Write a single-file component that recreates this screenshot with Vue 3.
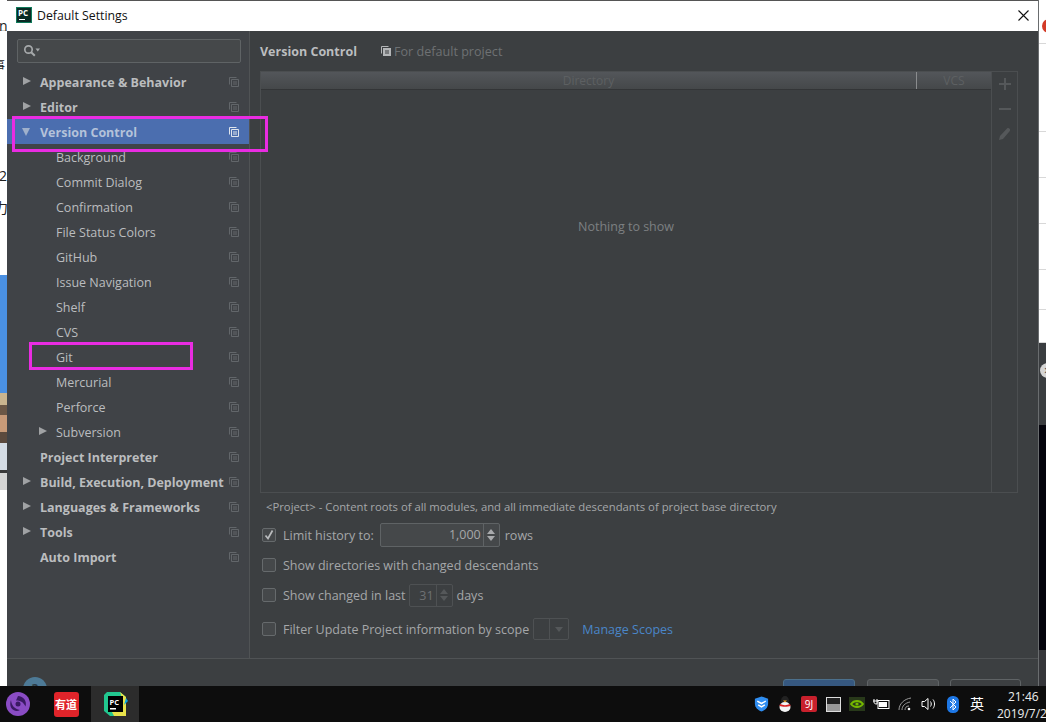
<script setup>
const tree = [
  { label: 'Appearance & Behavior', level: 0, arrow: 'right' },
  { label: 'Editor', level: 0, arrow: 'right' },
  { label: 'Version Control', level: 0, arrow: 'down', selected: true },
  { label: 'Background', level: 1 },
  { label: 'Commit Dialog', level: 1 },
  { label: 'Confirmation', level: 1 },
  { label: 'File Status Colors', level: 1 },
  { label: 'GitHub', level: 1 },
  { label: 'Issue Navigation', level: 1 },
  { label: 'Shelf', level: 1 },
  { label: 'CVS', level: 1 },
  { label: 'Git', level: 1 },
  { label: 'Mercurial', level: 1 },
  { label: 'Perforce', level: 1 },
  { label: 'Subversion', level: 1, arrow: 'right' },
  { label: 'Project Interpreter', level: 0 },
  { label: 'Build, Execution, Deployment', level: 0, arrow: 'right' },
  { label: 'Languages & Frameworks', level: 0, arrow: 'right' },
  { label: 'Tools', level: 0, arrow: 'right' },
  { label: 'Auto Import', level: 0 }
]

// rows of the page behind the dialog, seen at its right edge
const behindRows = [44, 88, 46, 46, 46, 40, 33]
</script>

<template>
  <div class="screen">
    <div class="desktop">
      <div class="edge edge-left">
        <span class="scrap s1">n.</span>
        <span class="scrap s2">事</span>
        <span class="scrap s3">2</span>
        <span class="scrap s4">力</span>
      </div>

      <div class="window">
        <div class="titlebar">
          <div class="pc-logo">PC<i></i></div>
          <span class="title">Default Settings</span>
          <svg class="close" width="11" height="11" viewBox="0 0 11 11">
            <path d="M.5.5l10 10M10.500.5l-10 10" stroke="#111" stroke-width="1.100" fill="none" />
          </svg>
        </div>

        <div class="body">
          <aside class="sidebar">
            <div class="search">
              <svg width="18" height="14" viewBox="0 0 18 14">
                <circle cx="5.500" cy="5.500" r="3.700" fill="none" stroke="#a6a9ab" stroke-width="1.700" />
                <path d="M8.200 8.200l3.600 3.600" stroke="#a6a9ab" stroke-width="2" />
                <path d="M12.500 4.500h4.500l-2.250 3z" fill="#a6a9ab" />
              </svg>
            </div>
            <ul class="tree">
              <li v-for="item in tree" :key="item.label" class="row" :class="['lv' + item.level, { selected: item.selected }]">
                <span class="arrow" :class="item.arrow"></span>
                <span class="label">{{ item.label }}</span>
                <svg class="copy" width="10" height="10" viewBox="0 0 10 10">
                  <path d="M.5 7.500V.5h7" fill="none" stroke="currentColor" />
                  <path d="M2.500 2.500h7v7h-7zM4 5h4M4 7h4" fill="none" stroke="currentColor" />
                </svg>
              </li>
            </ul>
          </aside>

          <main class="content">
            <div class="heading">
              <strong>Version Control</strong>
              <span class="scope">
                <svg width="10" height="10" viewBox="0 0 10 10">
                  <path d="M.5 7.500V.5h7" fill="none" stroke="#b4b6b8" />
                  <path d="M2 2h8v8H2z" fill="#b4b6b8" />
                  <path d="M4 5h4M4 7h4" stroke="#3c3f41" />
                </svg>
                For default project
              </span>
            </div>

            <div class="table-wrap">
              <div class="table">
                <div class="thead">
                  <div class="th-dir">Directory</div>
                  <div class="th-vcs">VCS</div>
                </div>
                <div class="empty">Nothing to show</div>
              </div>
              <div class="tools">
                <svg width="14" height="14" viewBox="0 0 14 14"><path d="M7 1v12M1 7h12" stroke="#55585a" stroke-width="2" /></svg>
                <svg width="14" height="14" viewBox="0 0 14 14"><path d="M1 7h12" stroke="#55585a" stroke-width="2" /></svg>
                <svg width="14" height="14" viewBox="0 0 14 14"><path d="M1 13l1-4 7-7.500c1-.8 2-.4 2.600.2.600.7.800 1.600 0 2.500L5 12z" fill="#55585a" /></svg>
              </div>
            </div>

            <p class="note">&lt;Project&gt; - Content roots of all modules, and all immediate descendants of project base directory</p>

            <div class="option opt-limit">
              <span class="check on">
                <svg width="12" height="12" viewBox="0 0 12 12"><path d="M2.500 6.500l2.500 3 4.500-8" fill="none" stroke="#b9bbbd" stroke-width="1.700" /></svg>
              </span>
              <span>Limit history to:</span>
              <div class="spin spin-wide">
                <span class="value">1,000</span>
                <span class="steps"><i class="up"></i><i class="down"></i></span>
              </div>
              <span>rows</span>
            </div>

            <div class="option opt-dirs">
              <span class="check"></span>
              <span>Show directories with changed descendants</span>
            </div>

            <div class="option opt-last">
              <span class="check"></span>
              <span>Show changed in last</span>
              <div class="spin spin-small">
                <span class="value">31</span>
                <span class="steps dim"><i class="up"></i><i class="down"></i></span>
              </div>
              <span>days</span>
            </div>

            <div class="option opt-filter">
              <span class="check"></span>
              <span>Filter Update Project information by scope</span>
              <div class="combo"><span class="combo-btn"><i></i></span></div>
              <a class="link">Manage Scopes</a>
            </div>
          </main>
        </div>

        <footer class="footer">
          <div class="help">?</div>
          <div class="buttons">
            <div class="btn primary"></div>
            <div class="btn"></div>
            <div class="btn apply"></div>
          </div>
        </footer>

        <!-- annotation boxes from the screenshot -->
        <div class="mark mark-vc"></div>
        <div class="mark mark-git"></div>
      </div>

      <div class="edge edge-right">
        <div class="behind-page">
          <div v-for="(h, i) in behindRows" :key="i" class="behind-row" :style="{ height: h + 'px' }"></div>
        </div>
        <div class="behind-dark"></div>
        <div class="behind-black"></div>
        <div class="behind-bar"></div>
        <span class="red-dot"></span>
        <span class="x-dot">×</span>
      </div>
    </div>

    <div class="taskbar">
      <div class="task task-first">
        <svg width="26" height="26" viewBox="0 0 26 26">
          <circle cx="13" cy="13" r="12" fill="#8a4cc4" />
          <path d="M13 5a8 8 0 0 1 7.500 10.500C18.500 11 15 9.500 11 9.500zM6 9c.5 5.500 3.500 9 9 10-3 2-7 1-9-2.500-1-2.500-1-5 0-7.500z" fill="#3a1a63" />
          <circle cx="13" cy="13" r="2.500" fill="#3a1a63" />
        </svg>
      </div>
      <div class="task">
        <div class="youdao">有道</div>
      </div>
      <div class="task active">
        <svg width="26" height="28" viewBox="0 0 26 28">
          <path d="M5 2h13l6 5v19H8l-6-5V5z" fill="#21c78f" />
          <path d="M18 2l6 5v19H12l-2-4h10V8z" fill="#e8e24a" />
          <path d="M24 8l2 3-4 4z" fill="#07a3e2" />
          <rect x="6" y="6" width="15" height="16" fill="#000" />
          <text x="7.500" y="14.500" class="pc-text">PC</text>
          <rect x="8" y="18" width="6" height="1.500" fill="#fff" />
        </svg>
      </div>

      <div class="tray">
        <div class="slot">
          <svg width="17" height="18" viewBox="0 0 18 18">
            <path d="M9 1l7 2.500v5c0 4-3 7-7 8.500-4-1.500-7-4.500-7-8.500v-5z" fill="#2f8df0" />
            <path d="M4.500 6L9 8.500 13.500 6M5.500 10L9 12l3.500-2" fill="none" stroke="#fff" stroke-width="1.600" />
          </svg>
        </div>
        <div class="slot">
          <svg width="16" height="18" viewBox="0 0 16 18">
            <ellipse cx="8" cy="6" rx="4" ry="5" fill="#222" />
            <ellipse cx="8" cy="12" rx="5.500" ry="5" fill="#f4f4f4" />
            <path d="M3 9c3 1.500 7 1.500 10 0l.5 2c-3 1-8 1-11 0z" fill="#d92121" />
            <path d="M6 5.500h4L8 7.500z" fill="#f0a020" />
          </svg>
        </div>
        <div class="slot"><div class="tray-red">9J</div></div>
        <div class="slot"><div class="tray-monitor"></div></div>
        <div class="slot">
          <svg width="16" height="14" viewBox="0 0 16 14">
            <rect width="16" height="14" fill="#28391a" />
            <path d="M2 7c3-4 9-4 12 0-3 4-9 4-12 0z" fill="none" stroke="#76b900" stroke-width="1.800" />
            <circle cx="8" cy="7" r="1.600" fill="#76b900" />
          </svg>
        </div>
        <div class="slot">
          <svg width="17" height="12" viewBox="0 0 17 12">
            <path d="M1 1v3c0 1.500 1 2 3 2V1M0 3h5" fill="none" stroke="#fff" />
            <rect x="5" y="2.500" width="11" height="8" fill="none" stroke="#fff" />
            <rect x="6" y="4" width="8" height="5" fill="#fff" />
          </svg>
        </div>
        <div class="slot">
          <svg width="14" height="14" viewBox="0 0 14 14">
            <path d="M1 13C1 7 6 2 13 1M4 13c0-4 3-7 8-8M7 13c0-2 1-4 4-4" fill="none" stroke="#9a9a9a" stroke-width="1" />
            <circle cx="11" cy="12" r="1.300" fill="#fff" />
          </svg>
        </div>
        <div class="slot">
          <svg width="16" height="14" viewBox="0 0 16 14">
            <path d="M1 4.500h2.500L7 1.500v11L3.500 9.500H1z" fill="none" stroke="#fff" />
            <path d="M9.500 4.500c1 1.500 1 3.500 0 5M12 2.500c2 2.500 2 6.500 0 9" fill="none" stroke="#fff" />
          </svg>
        </div>
        <div class="slot">
          <svg width="12" height="17" viewBox="0 0 12 17">
            <rect width="12" height="17" rx="5.500" fill="#1e78e6" />
            <path d="M3 5l6 6-3 3V3l3 3-6 6" fill="none" stroke="#fff" />
          </svg>
        </div>
        <div class="slot ime">英</div>
      </div>
      <div class="clock">
        <span>21:46</span>
        <span>2019/7/27</span>
      </div>
    </div>
  </div>
</template>

<style scoped>
.screen {
  width: 1046px;
  height: 722px;
  display: flex;
  flex-direction: column;
  overflow: hidden;
  font-family: "Open Sans", "Noto Sans", "Noto Sans CJK SC", sans-serif;
  font-size: 12.500px;
  background: #fff;
}

.desktop {
  height: 686px;
  display: flex;
  overflow: hidden;
}

.edge {
  position: relative;
  overflow: hidden;
  flex-shrink: 0;
}

.edge-left {
  width: 7px;
  background: linear-gradient(#fff 0 30px, #ccc 30px 31px, #fff 31px 275px, #4a90e2 275px 393px, #c9b48e 393px 405px, #6b5746 405px 415px, #c79a78 415px 432px, #5b4a3e 432px 443px, #d5dde6 443px 470px, #3a3a3a 470px 473px, #d5d5d5 473px 490px, #fff 490px);
}

.scrap {
  position: absolute;
  color: #222;
  font-size: 14px;
}

.s1 { top: 16px; left: -1px; }
.s2 { top: 56px; left: -7px; font-size: 12px; }
.s3 { top: 166px; left: -1px; }
.s4 { top: 197px; left: -6px; }

.edge-right {
  width: 8px;
  background: #fff;
  display: flex;
  flex-direction: column;
  border-left: 1px solid #6a6d6f;
  box-sizing: border-box;
}

.behind-page {
  height: 343px;
  flex-shrink: 0;
}

.behind-row {
  box-sizing: border-box;
  border-bottom: 1px solid #d8d8d8;
}

.behind-dark {
  height: 82px;
  flex-shrink: 0;
  background: #3a3d40;
}

.behind-black {
  height: 225px;
  flex-shrink: 0;
  background: #04040c;
}

.behind-bar {
  flex: 1;
  background: #35363a;
}

.red-dot {
  position: absolute;
  left: 3px;
  top: 19px;
  width: 14px;
  height: 14px;
  border-radius: 50%;
  background: #d33a26;
}

.x-dot {
  position: absolute;
  left: 1px;
  top: 363px;
  width: 15px;
  height: 15px;
  border-radius: 50%;
  background: #d5d5d5;
  color: #333;
  font-size: 12px;
  line-height: 15px;
  text-align: center;
}

.window {
  width: 1031px;
  flex-shrink: 0;
  position: relative;
  display: flex;
  flex-direction: column;
  overflow: hidden;
  background: #3c3f41;
  border-top: 1px solid #555;
  box-sizing: border-box;
}

.titlebar {
  height: 30px;
  flex-shrink: 0;
  background: #fff;
  display: flex;
  align-items: center;
  padding: 0 9px 2px;
  box-sizing: border-box;
  gap: 5px;
  color: #111;
  font-size: 12.300px;
}

.pc-logo {
  width: 16px;
  height: 16px;
  background: #0a2b25;
  border: 1px solid #0f7a5a;
  box-sizing: border-box;
  color: #fff;
  font-size: 8px;
  font-weight: 700;
  line-height: 10px;
  padding-left: 1px;
  position: relative;
}

.pc-logo i {
  position: absolute;
  left: 2px;
  bottom: 2px;
  width: 6px;
  height: 1px;
  background: #fff;
}

.title {
  flex: 1;
}

.body {
  height: 628px;
  flex-shrink: 0;
  display: flex;
  border-bottom: 1px solid #505355;
  box-sizing: border-box;
}

.sidebar {
  width: 243px;
  flex-shrink: 0;
  background: #404347;
  border-right: 1px solid #505355;
  box-sizing: border-box;
  padding-top: 8px;
}

.search {
  height: 24px;
  margin: 0 8px 0 10px;
  box-sizing: border-box;
  border: 1px solid #5f6365;
  border-radius: 2px;
  background: #45484a;
  display: flex;
  align-items: center;
  padding-left: 5px;
}

.tree {
  list-style: none;
  margin: 6px 0 0;
  padding: 0;
}

.row {
  height: 25px;
  display: flex;
  align-items: center;
  color: #bbbdbf;
  position: relative;
}

.lv0 .label {
  font-weight: 700;
  margin-left: 33px;
}

.lv1 .label {
  margin-left: 49px;
}

.label {
  flex: 1;
  white-space: nowrap;
  padding-top: 2px;
}

.arrow {
  position: absolute;
  left: 16px;
  top: 8px;
}

.lv1 .arrow {
  left: 32px;
}

.arrow.right {
  border-left: 8px solid #a0a2a4;
  border-top: 4.500px solid transparent;
  border-bottom: 4.500px solid transparent;
}

.arrow.down {
  top: 9px;
  left: 15px;
  border-top: 8px solid #9fb0cc;
  border-left: 4.500px solid transparent;
  border-right: 4.500px solid transparent;
}

.copy {
  margin-right: 10px;
  color: #62666a;
}

.row.selected {
  background: #4b6eaf;
  color: #b4c2da;
}

.row.selected .copy {
  color: #dfe4ec;
}

.content {
  flex: 1;
  min-width: 0;
  padding: 0 20px 0 10px;
  color: #a5a7a9;
}

.heading {
  height: 40px;
  display: flex;
  align-items: center;
  color: #bbbdbf;
}

.heading strong {
  width: 121px;
}

.scope {
  display: flex;
  align-items: center;
  gap: 3px;
  color: #6e7173;
  font-size: 12.600px;
}

.table-wrap {
  height: 422px;
  display: flex;
  border: 1px solid #4b4e50;
  box-sizing: border-box;
}

.table {
  flex: 1;
  display: flex;
  flex-direction: column;
  border-right: 1px solid #4b4e50;
}

.thead {
  height: 17px;
  display: flex;
  background: linear-gradient(#53565a, #45484a);
  border-bottom: 1px solid #333537;
  color: #5d6062;
  line-height: 17px;
  font-size: 12px;
}

.th-dir {
  width: 655px;
  text-align: center;
  border-right: 1px solid #8a8c8e;
}

.th-vcs {
  flex: 1;
  text-align: center;
}

.empty {
  padding-top: 128px;
  text-align: center;
  color: #7d8082;
}

.tools {
  width: 25px;
  display: flex;
  flex-direction: column;
  align-items: center;
  gap: 11px;
  padding-top: 5px;
}

.note {
  margin: 6px 0 0 6px;
  height: 16px;
  line-height: 16px;
  font-size: 11.300px;
  color: #a5a7a9;
}

.option {
  display: flex;
  align-items: center;
  margin-left: 2px;
  white-space: nowrap;
}

.opt-limit { margin-top: 7px; height: 26px; }
.opt-dirs { margin-top: 4px; height: 26px; }
.opt-last { margin-top: 4px; height: 26px; }
.opt-filter { margin-top: 9px; height: 24px; }

.check {
  width: 14px;
  height: 14px;
  border: 1px solid #666a6c;
  border-radius: 2px;
  background: #45484a;
  margin-right: 7px;
  box-sizing: border-box;
  flex-shrink: 0;
  display: flex;
  align-items: center;
  justify-content: center;
}

.spin {
  display: flex;
  align-items: stretch;
  box-sizing: border-box;
  border: 1px solid #5f6365;
  border-radius: 2px;
  margin: 0 5px 0 6px;
}

.spin-wide {
  width: 120px;
  height: 24px;
  background: #45484a;
}

.spin-small {
  width: 44px;
  height: 23px;
  margin-left: 3px;
  margin-right: 4px;
  border-color: #4e5153;
  color: #6e7173;
}

.value {
  flex: 1;
  text-align: right;
  padding-right: 2px;
  line-height: 22px;
}

.steps {
  width: 15px;
  border-left: 1px solid #5f6365;
  display: flex;
  flex-direction: column;
  align-items: center;
  justify-content: center;
  gap: 2px;
}

.steps i {
  width: 0;
  height: 0;
  border-left: 4px solid transparent;
  border-right: 4px solid transparent;
}

.steps .up { border-bottom: 5px solid #a8aaac; }
.steps .down { border-top: 5px solid #a8aaac; }
.steps.dim { border-color: #4e5153; }
.steps.dim .up { border-bottom-color: #55585a; }
.steps.dim .down { border-top-color: #55585a; }

.combo {
  width: 36px;
  height: 22px;
  margin: 0 13px 0 4px;
  display: flex;
  justify-content: flex-end;
  border: 1px solid #4e5153;
  border-radius: 2px;
  box-sizing: border-box;
}

.combo-btn {
  width: 18px;
  border-left: 1px solid #4e5153;
  display: flex;
  align-items: center;
  justify-content: center;
}

.combo-btn i {
  border-top: 5px solid #55585a;
  border-left: 4px solid transparent;
  border-right: 4px solid transparent;
}

.link {
  color: #4a86c8;
}

.footer {
  flex: 1;
  position: relative;
  display: flex;
  justify-content: flex-end;
  padding: 20px 17px 0 0;
}

.help {
  position: absolute;
  left: 16px;
  top: 18px;
  width: 24px;
  height: 24px;
  border-radius: 50%;
  background: #4d7a96;
  color: #2b3a44;
  font-weight: 700;
  text-align: center;
  line-height: 24px;
}

.buttons {
  display: flex;
  gap: 12px;
}

.btn {
  width: 72px;
  height: 26px;
  box-sizing: border-box;
  background: #4b4e50;
  border: 1px solid #5f6365;
  border-radius: 3px;
}

.btn.primary {
  background: #365880;
  border-color: #4c708c;
}

.btn.apply {
  width: 71px;
  margin-left: -1px;
  background: #3c3f41;
}

.mark {
  position: absolute;
  box-sizing: border-box;
  border: 3px solid #e92ce2;
  pointer-events: none;
}

.mark-vc {
  left: 5px;
  top: 115px;
  width: 256px;
  height: 36px;
}

.mark-git {
  left: 22px;
  top: 341px;
  width: 164px;
  height: 28px;
}

.taskbar {
  flex: 1;
  display: flex;
  align-items: stretch;
  background: #0d0d0d;
  color: #eee;
  overflow: hidden;
}

.task {
  width: 48px;
  display: flex;
  align-items: center;
  justify-content: center;
}

.task-first {
  width: 35px;
  margin-right: 7px;
}

.task.active {
  background: #2c2c2c;
  margin-left: 1px;
}

.youdao {
  width: 25px;
  height: 25px;
  border-radius: 3px;
  background: #e0242a;
  color: #fff;
  font-size: 11px;
  font-weight: 700;
  line-height: 25px;
  text-align: center;
  white-space: nowrap;
  overflow: hidden;
}

.pc-text {
  font-size: 7.500px;
  font-weight: 700;
  fill: #fff;
}

.tray {
  margin-left: auto;
  display: flex;
  align-items: center;
}

.slot {
  width: 24px;
  display: flex;
  align-items: center;
  justify-content: center;
}

.tray-red {
  width: 16px;
  height: 16px;
  background: #c8202c;
  border-radius: 2px;
  color: #fff;
  font-size: 10px;
  line-height: 16px;
  text-align: center;
}

.tray-monitor {
  width: 13px;
  height: 13px;
  border: 1px solid #ddd;
  background: linear-gradient(#222 50%, #999 50%);
}

.ime {
  font-size: 14px;
  color: #fff;
  line-height: 20px;
}

.clock {
  width: 49px;
  margin-left: 8px;
  display: flex;
  flex-direction: column;
  align-items: flex-start;
  font-size: 12px;
  line-height: 17px;
  padding-top: 2px;
  white-space: nowrap;
  overflow: hidden;
}

.clock span:first-child {
  margin-left: 11px;
}
</style>
